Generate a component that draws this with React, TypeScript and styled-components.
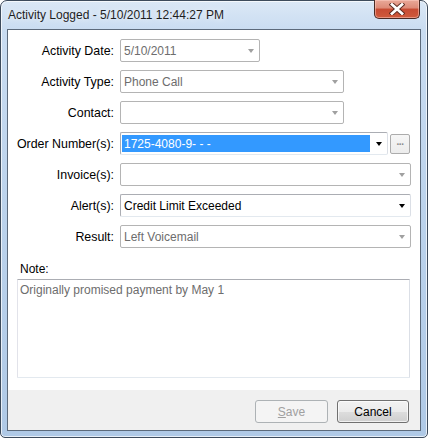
import React from 'react'
import styled, { createGlobalStyle } from 'styled-components'

const GlobalStyle = createGlobalStyle`
	html, body {
		margin: 0;
		padding: 0;
		background: #ffffff;
	}
	body {
		font-family: 'Liberation Sans', Arial, sans-serif;
		font-size: 12px;
		color: #000;
	}
	* {
		box-sizing: border-box;
	}
`

const Window = styled.div`
	width: 428px;
	height: 438px;
	display: flex;
	flex-direction: column;
	padding: 0 6px 6px;
	border: 1px solid #3d4b5c;
	border-radius: 7px 7px 5px 5px;
	background: linear-gradient(
		180deg,
		#dbe8f6 0px,
		#c9dcf1 30px,
		#bcd3ec 200px,
		#afc9e6 100%
	);
	box-shadow: inset 0 0 0 1px rgba(255, 255, 255, 0.7);
`

const TitleBar = styled.div`
	height: 28px;
	display: flex;
	align-items: center;
	justify-content: space-between;
	padding-left: 1px;
`

const Title = styled.span`
	font-family: 'Liberation Sans', Arial, sans-serif;
	font-size: 12px;
	color: #1e1e1e;
	text-shadow: 0 0 6px rgba(255, 255, 255, 0.9);
`

const CloseButton = styled.div`
	align-self: flex-start;
	margin-top: -1px;
	margin-right: 1px;
	width: 46px;
	height: 19px;
	display: flex;
	align-items: center;
	justify-content: center;
	border: 1px solid #4a2a24;
	border-top: none;
	border-radius: 0 0 5px 5px;
	background: linear-gradient(
		180deg,
		#e9a999 0%,
		#dd8a77 45%,
		#c74b33 50%,
		#cf5a3c 100%
	);
	box-shadow: inset 0 0 0 1px rgba(255, 210, 200, 0.5);
`

const Client = styled.div`
	flex: 1;
	display: flex;
	flex-direction: column;
	border: 1px solid #5c6a7b;
	background: #ffffff;
`

const Form = styled.div`
	flex: 1;
	display: flex;
	flex-direction: column;
`

const Fields = styled.div`
	display: grid;
	grid-template-columns: 106px 1fr;
	grid-auto-rows: 23px;
	column-gap: 6px;
	row-gap: 8px;
	padding: 9px 9px 0 0;
`

const Label = styled.label`
	display: flex;
	align-items: center;
	justify-content: flex-end;
	white-space: nowrap;
	font-size: 12.4px;
`

const FieldCell = styled.div`
	display: flex;
	align-items: center;
	gap: 2px;
`

const Combo = styled.div<{ $width?: number; $enabled?: boolean }>`
	width: ${p => (p.$width ? `${p.$width}px` : '100%')};
	height: 23px;
	display: flex;
	align-items: center;
	border: 1px solid ${p => (p.$enabled ? '#abadb3' : '#b4b4b4')};
	border-right-color: ${p => (p.$enabled ? '#dbdfe6' : '#b4b4b4')};
	border-bottom-color: ${p => (p.$enabled ? '#e3e9ef' : '#b4b4b4')};
	border-radius: 2px;
	background: #fff;
	padding: 2px 0 2px 1px;
`

const ComboText = styled.div<{ $enabled?: boolean; $selected?: boolean }>`
	flex: 1;
	height: 100%;
	display: flex;
	align-items: center;
	padding-left: 2px;
	white-space: nowrap;
	overflow: hidden;
	color: ${p => (p.$selected ? '#fff' : p.$enabled ? '#000' : '#6d6d6d')};
	background: ${p => (p.$selected ? '#3399ff' : 'transparent')};
`

const Arrow = styled.div<{ $enabled?: boolean }>`
	width: 17px;
	height: 100%;
	display: flex;
	align-items: center;
	justify-content: center;
	&::after {
		content: '';
		width: 0;
		height: 0;
		margin-top: 1px;
		border-left: 3.5px solid transparent;
		border-right: 3.5px solid transparent;
		border-top: 4px solid ${p => (p.$enabled ? '#000' : '#a0a0a0')};
	}
`

const EllipsisButton = styled.div`
	width: 20px;
	height: 20px;
	display: flex;
	align-items: center;
	justify-content: center;
	border: 1px solid #acacac;
	border-radius: 2px;
	background: linear-gradient(180deg, #f6f6f6, #ececec);
	color: #8a8a8a;
	font-size: 10px;
	font-weight: bold;
	letter-spacing: -0.5px;
	line-height: 1;
	padding-bottom: 4px;
`

const NoteSection = styled.div`
	display: flex;
	flex-direction: column;
	padding: 0 10px 12px 9px;
	margin-top: 13px;
	flex: 1;
`

const NoteLabel = styled.div`
	padding-left: 3px;
	height: 18px;
	line-height: 16px;
`

const NoteArea = styled.div`
	flex: 1;
	border: 1px solid #abadb3;
	border-left-color: #e2e3ea;
	border-right-color: #dbdfe6;
	border-bottom-color: #e3e9ef;
	border-radius: 1px;
	padding: 3px 2px;
	color: #6d6d6d;
`

const Footer = styled.div`
	height: 40px;
	display: flex;
	justify-content: flex-end;
	gap: 9px;
	padding: 10px 11px 0 0;
	background: #f0f0f0;
`

const Button = styled.div<{ $disabled?: boolean; $width: number }>`
	width: ${p => p.$width}px;
	height: 23px;
	display: flex;
	align-items: center;
	justify-content: center;
	border: 1px solid ${p => (p.$disabled ? '#adb2b5' : '#707070')};
	border-radius: 3px;
	color: ${p => (p.$disabled ? '#a0a0a0' : '#000')};
	background: ${p =>
		p.$disabled
			? '#f4f4f4'
			: 'linear-gradient(180deg, #f2f2f2 0%, #ebebeb 50%, #dddddd 51%, #cfcfcf 100%)'};
	box-shadow: ${p => (p.$disabled ? 'none' : 'inset 0 0 0 1px rgba(255,255,255,0.7)')};
	u {
		text-decoration: underline;
	}
`

function CloseGlyph() {
	return (
		<svg width="16" height="12" viewBox="0 0 16 12">
			<path d="M3 1.5 L13 10.5 M13 1.5 L3 10.5" stroke="#5a2a20" strokeWidth="4.6" strokeLinecap="square" />
			<path d="M3 1.5 L13 10.5 M13 1.5 L3 10.5" stroke="#ffffff" strokeWidth="2.8" strokeLinecap="square" />
		</svg>
	)
}

type Row = {
	label: string
	value: string
	width?: number
	enabled?: boolean
	selected?: boolean
	browse?: boolean
}

const rows: Row[] = [
	{ label: 'Activity Date:', value: '5/10/2011', width: 140 },
	{ label: 'Activity Type:', value: 'Phone Call', width: 224 },
	{ label: 'Contact:', value: '', width: 224 },
	{ label: 'Order Number(s):', value: '1725-4080-9- - -', width: 268, enabled: true, selected: true, browse: true },
	{ label: 'Invoice(s):', value: '' },
	{ label: 'Alert(s):', value: 'Credit Limit Exceeded', enabled: true },
	{ label: 'Result:', value: 'Left Voicemail' }
]

export default function App() {
	return (
		<>
			<GlobalStyle />
			<Window>
				<TitleBar>
					<Title>Activity Logged - 5/10/2011 12:44:27 PM</Title>
					<CloseButton>
						<CloseGlyph />
					</CloseButton>
				</TitleBar>
				<Client>
					<Form>
						<Fields>
							{rows.map(row => (
								<React.Fragment key={row.label}>
									<Label>{row.label}</Label>
									<FieldCell>
										<Combo $width={row.width} $enabled={row.enabled}>
											<ComboText $enabled={row.enabled} $selected={row.selected}>
												{row.value}
											</ComboText>
											<Arrow $enabled={row.enabled} />
										</Combo>
										{row.browse && <EllipsisButton>...</EllipsisButton>}
									</FieldCell>
								</React.Fragment>
							))}
						</Fields>
						<NoteSection>
							<NoteLabel>Note:</NoteLabel>
							<NoteArea>Originally promised payment by May 1</NoteArea>
						</NoteSection>
					</Form>
					<Footer>
						<Button $disabled $width={73}>
							<u>S</u>ave
						</Button>
						<Button $width={72}>Cancel</Button>
					</Footer>
				</Client>
			</Window>
		</>
	)
}
